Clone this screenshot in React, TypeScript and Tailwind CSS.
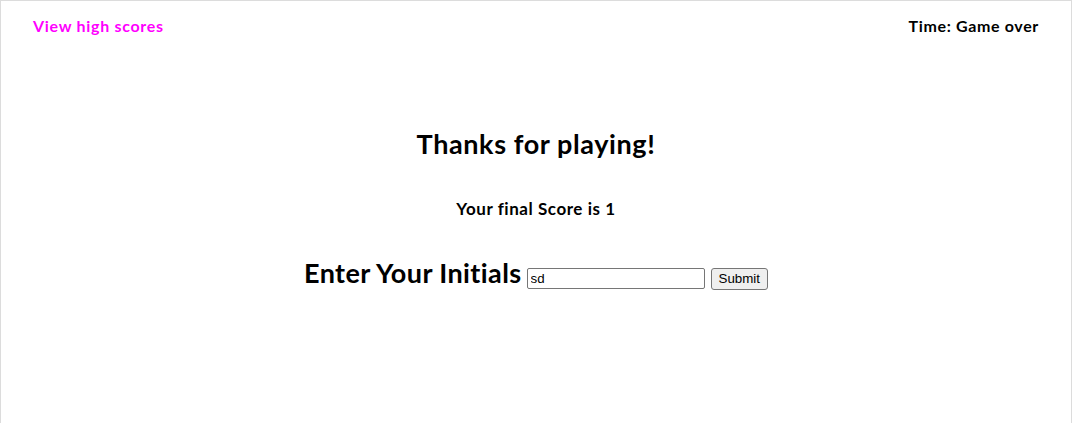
export default function App() {
  return (
    <div className="h-[423px] w-full overflow-hidden border border-b-0 border-[#dcdcdc] bg-white font-['Lato',sans-serif] text-black">
      <header className="flex items-center justify-between px-[32px] pt-[13px]">
        <a href="#" className="text-[16px] font-bold tracking-[0.7px] text-[#ff00ff]">
          View high scores
        </a>
        <div className="text-[16px] font-bold tracking-[0.65px]">Time: Game over</div>
      </header>

      <main className="flex flex-col items-center pt-[90px]">
        <h1 className="text-[27px] font-bold leading-[32px] tracking-[0.6px]">Thanks for playing!</h1>
        <p className="mt-[36px] text-[17px] font-bold tracking-[0.55px]">Your final Score is 1</p>
        <div className="mt-[31px] flex items-baseline">
          <h2 className="text-[27px] font-bold tracking-[0.4px]">Enter Your Initials</h2>
          <input
            type="text"
            defaultValue="sd"
            className="ml-[5px] h-[21px] w-[178px] rounded-[2px] border border-[#767676] px-[3px] font-['Liberation_Sans',Arial,sans-serif] text-[13.33px] outline-none"
          />
          <button className="ml-[6px] h-[22px] rounded-[3px] border border-[#767676] bg-[#efefef] px-[7px] font-['Liberation_Sans',Arial,sans-serif] text-[13.33px]">
            Submit
          </button>
        </div>
      </main>
    </div>
  )
}
